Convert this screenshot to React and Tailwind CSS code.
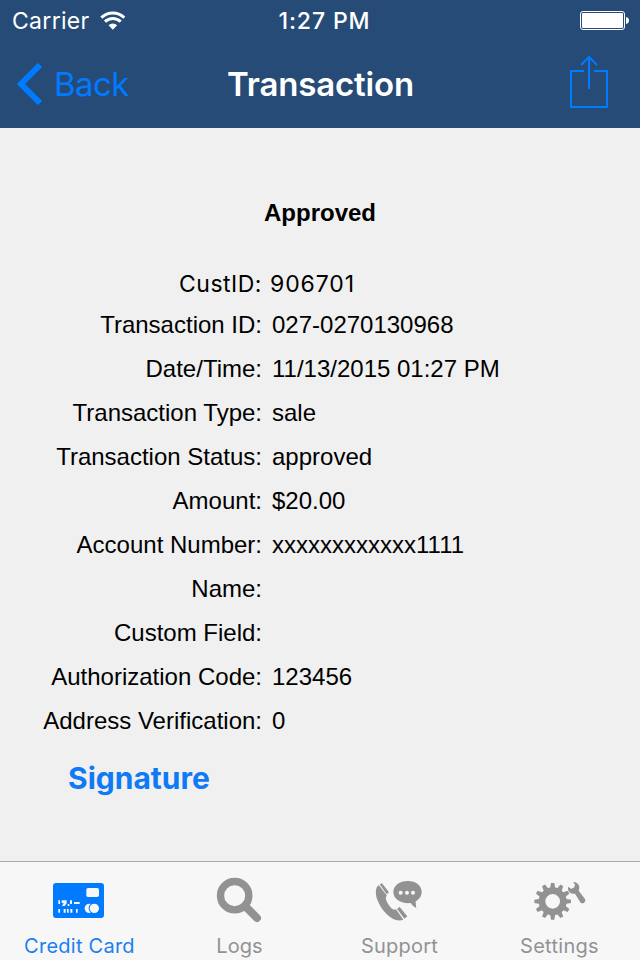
const details = [
  { label: 'Transaction ID:', value: '027-0270130968' },
  { label: 'Date/Time:', value: '11/13/2015 01:27 PM' },
  { label: 'Transaction Type:', value: 'sale' },
  { label: 'Transaction Status:', value: 'approved' },
  { label: 'Amount:', value: '$20.00' },
  { label: 'Account Number:', value: 'xxxxxxxxxxxx1111' },
  { label: 'Name:', value: '' },
  { label: 'Custom Field:', value: '' },
  { label: 'Authorization Code:', value: '123456' },
  { label: 'Address Verification:', value: '0' },
];

const teeth = [0, 30, 60, 90, 120, 150, 180, 210, 240, 270, 300, 330];

function WifiIcon() {
  return (
    <svg className="w-[25px] h-[19px]" viewBox="300 31 75 57" fill="none" stroke="currentColor" strokeWidth="9">
      <path d="M304 51 A49 49 0 0 1 373 51" />
      <path d="M315 63 A33 33 0 0 1 362 63" />
      <path d="M338.500 87 L325.500 74 A19 19 0 0 1 351.500 74 Z" fill="currentColor" stroke="none" />
    </svg>
  );
}

function BatteryIcon() {
  return (
    <svg className="w-[49px] h-[19px]" viewBox="0 0 49 19">
      <rect x="0.500" y="0.500" width="44" height="18" rx="2.500" fill="none" stroke="#fff" />
      <rect x="2" y="2" width="41" height="15" rx="1" fill="#fff" />
      <path d="M46 6 C48 6.500 49 7.500 49 9.500 C49 11.500 48 12.500 46 13 Z" fill="#fff" />
    </svg>
  );
}

function ShareIcon() {
  return (
    <svg className="w-[38px] h-[53px]" viewBox="0 0 38 53" fill="none" stroke="#007aff" strokeWidth="2">
      <path d="M14 16 H1 V52 H37 V16 H24" />
      <path d="M19 34 V2 M11 10 L19 2 L27 10" />
    </svg>
  );
}

function CardIcon() {
  return (
    <svg className="w-[60px] h-[48px]" viewBox="150 63 180 144">
      <rect x="159" y="84" width="153" height="105" rx="9" fill="#007aff" />
      <g fill="#f7f7f7">
        <rect x="259" y="99" width="38" height="27" rx="5" />
        <circle cx="268" cy="160" r="14" />
        <circle cx="283" cy="160" r="17" fill="#007aff" />
        <circle cx="283" cy="160" r="14" />
        <path d="M175 136h5v11h-5z M185 136h15v9l-6 8h-8l5-9h-6z M203 147h5v6h-5z M210 136h6v11h-6z M222 141h17v6h-17z" />
        <path d="M175 162h5v11h-5z M191 162h6v11h-6z M201 162h5v11h-5z M211 162h6v11h-6z M228 162h5v11h-5z" />
      </g>
    </svg>
  );
}

function LogsIcon() {
  return (
    <svg className="w-[60px] h-[48px]" viewBox="90 63 180 144" fill="none" stroke="#929292">
      <circle cx="164" cy="122" r="42.500" strokeWidth="22" />
      <path d="M197 155 L231 189" strokeWidth="24" strokeLinecap="round" />
    </svg>
  );
}

function SupportIcon() {
  return (
    <svg className="w-[60px] h-[48px]" viewBox="90 63 180 144" fill="#929292">
      <path d="M114 92 C106 99 105 119 114 139 C124 163 144 187 165 194 C174 197 184 197 190 194 L168 163 C164 165 159 164 153 158 C145 150 140 142 138 133 C137 128 138 124 141 122 L117 91 Z" />
      <path d="M119 88 L126 85 L147 112 L140 118 Z" />
      <path d="M171 161 L179 156 L202 184 L193 191 Z" />
      <path d="M203 78 C228 78 245 92 245 111 C245 123 238 133 227 139 C227 147 228 153 229 159 C222 156 216 150 212 144 C183 147 160 132 160 111 C160 92 179 78 203 78 Z" />
      <g fill="#f7f7f7">
        <circle cx="182" cy="113" r="6" />
        <circle cx="201" cy="113" r="6" />
        <circle cx="219" cy="113" r="6" />
      </g>
    </svg>
  );
}

function SettingsIcon() {
  return (
    <svg className="w-[60px] h-[48px]" viewBox="90 63 180 144" fill="#929292">
      <circle cx="158" cy="139" r="32" fill="none" stroke="#929292" strokeWidth="20" />
      {teeth.map((deg) => (
        <path key={deg} d="M150 102 L153 84 H163 L166 102 Z" transform={`rotate(${deg} 158 139)`} />
      ))}
      <path d="M219 82 C228 80 237 87 238 96 C238 100 237 104 236 107 L255 132 C259 141 249 149 242 143 L225 116 C215 118 205 112 204 103 L204 95 L213 101 L222 98 L225 89 Z" />
    </svg>
  );
}

const tabs = [
  { label: 'Credit Card', icon: CardIcon, color: 'text-[#1a7ff0]', spacing: 'tracking-[0.25px]' },
  { label: 'Logs', icon: LogsIcon, color: 'text-[#929292]', spacing: 'tracking-[0.1px]' },
  { label: 'Support', icon: SupportIcon, color: 'text-[#929292]', spacing: 'tracking-[0.2px]' },
  { label: 'Settings', icon: SettingsIcon, color: 'text-[#929292]', spacing: 'tracking-[0.3px]' },
];

export default function App() {
  return (
    <div className="flex flex-col w-[640px] h-[960px] overflow-hidden bg-[#f0f0f0] text-black font-['Inter',sans-serif]">
      <header className="h-32 shrink-0 bg-[#264b77] text-white">
        {/* Status bar */}
        <div className="grid grid-cols-3 items-center h-10 pl-3 pr-[11px]">
          <div className="flex items-center gap-[10px]">
            <span className="text-[23px] leading-10 tracking-[0.3px] pt-px">Carrier</span>
            <WifiIcon />
          </div>
          <span className="text-center text-[23px] leading-10 font-medium tracking-[0.9px] pl-[8px] pt-px">1:27 PM</span>
          <div className="flex justify-end">
            <BatteryIcon />
          </div>
        </div>

        {/* Navigation bar */}
        <div className="grid grid-cols-3 items-center h-[88px] pl-[17px] pr-8">
          <button className="flex items-center gap-[11px] text-[#007aff]">
            <svg className="w-[26px] h-[42px]" viewBox="0 0 26 42" fill="none" stroke="currentColor" strokeWidth="6">
              <path d="M23 2 L4 21 L23 40" />
            </svg>
            <span className="text-[33px] leading-[44px] tracking-[-0.6px]">Back</span>
          </button>
          <h1 className="text-center text-[33px] leading-[44px] font-semibold tracking-[-0.15px] pl-[13px]">Transaction</h1>
          <div className="flex justify-end pb-[6px]">
            <ShareIcon />
          </div>
        </div>
      </header>

      <main className="flex-1 pt-[69px]">
        <h2 className="text-center text-2xl leading-8 font-bold font-['Liberation_Sans',sans-serif]">Approved</h2>

        <div className="flex h-11 mt-[33px] items-center text-[23px] leading-11 tracking-[0.5px]">
          <span className="w-[262px] text-right">CustID:</span>
          <span className="pl-[8px] tracking-[0.9px]">906701</span>
        </div>

        <div className="-mt-[3px] font-['Liberation_Sans',sans-serif] text-2xl">
          {details.map((d) => (
            <div key={d.label} className="flex h-11 items-center">
              <span className="w-[262px] text-right">{d.label}</span>
              <span className="pl-[10px]">{d.value}</span>
            </div>
          ))}
        </div>

        <button className="ml-[68px] mt-[13px] text-[30px] leading-[44px] font-bold text-[#0f7af5]">Signature</button>
      </main>

      <nav className="grid grid-cols-4 h-[99px] shrink-0 border-t border-[#a9a9a9] bg-[#f7f7f7]">
        {tabs.map((t) => (
          <div key={t.label} className="flex flex-col items-center pt-[14px]">
            <t.icon />
            <span className={`mt-[10px] pr-px text-xl leading-6 ${t.color} ${t.spacing}`}>{t.label}</span>
          </div>
        ))}
      </nav>
    </div>
  );
}
